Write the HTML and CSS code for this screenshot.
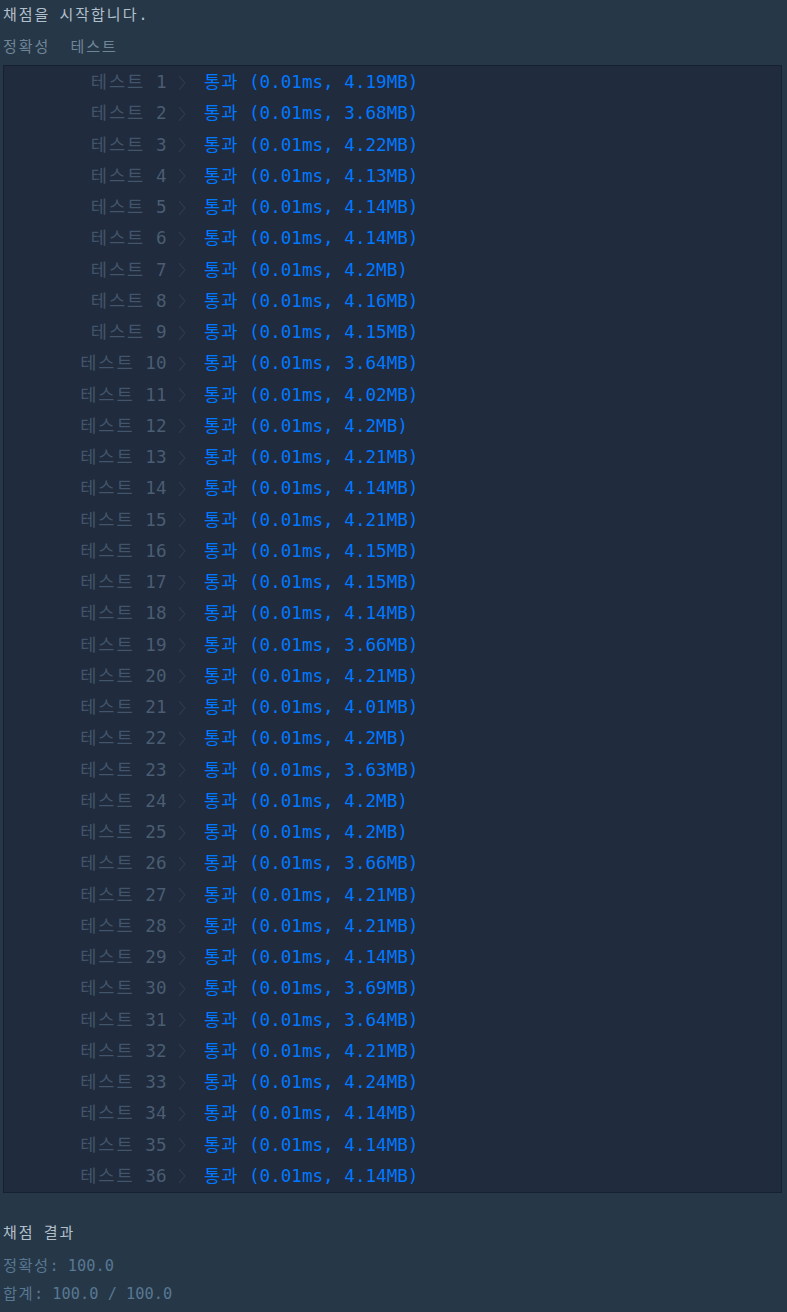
FILE: index.html
```html
<!DOCTYPE html>
<html lang="ko">
<head>
<meta charset="utf-8">
<title>채점 결과</title>
<link rel="stylesheet" href="styles.css">
</head>
<body>
<div class="console">
  <p class="log"><span class="ko">채점을</span> <span class="ko">시작합니다</span>.</p>
  <p class="section"><span class="ko">정확성</span><span class="ko">테스트</span></p>
  <div class="results" id="results"></div>
  <p class="log heading"><span class="ko">채점</span> <span class="ko">결과</span></p>
  <p class="score"><span class="ko">정확성</span>: 100.0</p>
  <p class="score"><span class="ko">합계</span>: 100.0 / 100.0</p>
</div>
<script src="script.js"></script>
</body>
</html>
```

FILE: styles.css
```css
html, body {
  margin: 0;
  padding: 0;
  background: #263747;
}
body {
  font-family: "DejaVu Sans Mono", "Noto Sans CJK KR", monospace;
}
.console {
  padding: 0 5px 0 3px;
}
p {
  margin: 0;
  white-space: pre;
}
.ko {
  letter-spacing: 2px;
}
.log {
  font-size: 15px;
  line-height: 30px;
  color: #b2c0cc;
}
.section {
  display: flex;
  gap: 20px;
  font-size: 15px;
  line-height: 30px;
  margin-top: 2px;
  color: #6f8699;
}
.results {
  margin-top: 3px;
  padding-top: 1px;
  background: #202b3d;
  border: 1px solid #172031;
}
.row {
  display: grid;
  grid-template-columns: 162.5px 37.5px auto;
  height: 31.25px;
  line-height: 31.25px;
  font-size: 17.6px;
  white-space: pre;
}
.title {
  text-align: right;
  color: #42556a;
}
.title .ko {
  letter-spacing: 2px;
}
.title .num {
  color: #4a5d72;
}
.arrow {
  display: flex;
  align-items: center;
  padding-left: 11px;
}
.arrow svg {
  display: block;
}
.pass {
  color: #0078ff;
}
.pass .ko {
  letter-spacing: 1px;
}
.heading {
  margin-top: 26px;
  line-height: 28px;
}
.score {
  font-size: 15.3px;
  line-height: 28px;
  color: #587893;
}
.score .ko {
  letter-spacing: 1.4px;
}
.heading + .score {
  margin-top: 5px;
}
```

FILE: script.js
```js
var mem = ["4.19","3.68","4.22","4.13","4.14","4.14","4.2","4.16","4.15","3.64","4.02","4.2","4.21","4.14","4.21","4.15","4.15","4.14","3.66","4.21","4.01","4.2","3.63","4.2","4.2","3.66","4.21","4.21","4.14","3.69","3.64","4.21","4.24","4.14","4.14","4.14"];
var box = document.getElementById("results");
var html = "";
for (var i = 0; i < mem.length; i++) {
  html += '<div class="row"><span class="title"><span class="ko">테스트</span> <span class="num">' + (i + 1) + '</span></span>' +
    '<span class="arrow"><svg width="8" height="16" viewBox="0 0 8 16"><polyline points="1,1 7,8 1,15" fill="none" stroke="#2d3a4c" stroke-width="1.2"/></svg></span>' +
    '<span class="pass"><span class="ko">통과</span> (0.01ms, ' + mem[i] + 'MB)</span></div>';
}
box.innerHTML = html;
```
